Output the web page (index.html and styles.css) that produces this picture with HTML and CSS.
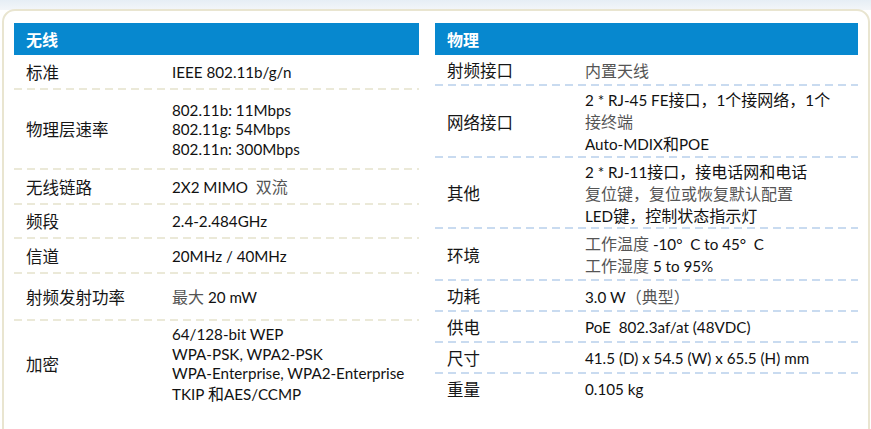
FILE: index.html
```html
<!DOCTYPE html>
<html lang="zh-CN">
<head>
<meta charset="utf-8">
<title>规格</title>
<link rel="stylesheet" href="styles.css">
</head>
<body>
<div class="page">
  <div class="panel">
    <section class="spec spec-left">
      <div class="head">无线</div>
      <div class="row"><div class="k">标准</div><div class="v">IEEE 802.11b/g/n</div></div>
      <div class="row"><div class="k">物理层速率</div><div class="v">802.11b: 11Mbps<br>802.11g: 54Mbps<br>802.11n: 300Mbps</div></div>
      <div class="row"><div class="k">无线链路</div><div class="v">2X2 MIMO&nbsp; <span class="g">双流</span></div></div>
      <div class="row"><div class="k">频段</div><div class="v">2.4-2.484GHz</div></div>
      <div class="row"><div class="k">信道</div><div class="v">20MHz / 40MHz</div></div>
      <div class="row"><div class="k">射频发射功率</div><div class="v"><span class="g">最大</span> 20 mW</div></div>
      <div class="row last"><div class="k">加密</div><div class="v">64/128-bit WEP<br>WPA-PSK, WPA2-PSK<br>WPA-Enterprise, WPA2-Enterprise<br>TKIP <span class="c">和</span>AES/CCMP</div></div>
    </section>
    <section class="spec spec-right">
      <div class="head">物理</div>
      <div class="row"><div class="k">射频接口</div><div class="v"><span class="g">内置天线</span></div></div>
      <div class="row"><div class="k">网络接口</div><div class="v">2 * RJ-45 FE<span class="c">接口，</span>1<span class="c">个接网络，</span>1<span class="c">个</span><br><span class="g">接终端</span><br>Auto-MDIX<span class="c">和</span>POE</div></div>
      <div class="row"><div class="k">其他</div><div class="v">2 * RJ-11<span class="c">接口，接电话网和电话</span><br><span class="g">复位键，复位或恢复默认配置</span><br>LED<span class="c">键，控制状态指示灯</span></div></div>
      <div class="row"><div class="k">环境</div><div class="v"><span class="g">工作温度</span> -10°&nbsp; C to 45°&nbsp; C<br><span class="g">工作湿度</span> 5 to 95%</div></div>
      <div class="row"><div class="k">功耗</div><div class="v">3.0 W<span class="g">（典型）</span></div></div>
      <div class="row"><div class="k">供电</div><div class="v">PoE&nbsp; 802.3af/at (48VDC)</div></div>
      <div class="row"><div class="k">尺寸</div><div class="v">41.5 (D) x 54.5 (W) x 65.5 (H) mm</div></div>
      <div class="row last"><div class="k">重量</div><div class="v">0.105 kg</div></div>
    </section>
  </div>
</div>
</body>
</html>
```

FILE: styles.css
```css
html, body {
  margin: 0;
  padding: 0;
}
body {
  width: 871px;
  height: 429px;
  overflow: hidden;
  background: linear-gradient(to bottom, #e6eef5 0px, #f3f6f9 10px, #ffffff 10px);
  font-family: Lato, "Noto Sans CJK SC", sans-serif;
  color: #111;
}
.page {
  padding: 9px 1px 0 2px;
}
.panel {
  height: 440px;
  box-sizing: border-box;
  border: 2px solid #e9e5d0;
  border-radius: 13px;
  background: #fff;
  padding: 12px 9px 0 10px;
  display: flex;
  gap: 16px;
}
.spec {
  display: grid;
  align-content: start;
}
.spec-left {
  width: 405px;
  grid-template-rows: 32px 35px 80px 35px 34px 35px 47px 100px;
}
.spec-right {
  width: 423px;
  grid-template-rows: 32px 31px 72px 71px 52px 31px 31px 31px 40px;
}
.head {
  background: #0788cf;
  color: #fff;
  font-weight: bold;
  font-size: 16px;
  line-height: 32px;
  padding-left: 12px;
  font-family: "Noto Sans CJK SC", sans-serif;
}
.row {
  display: grid;
  align-items: center;
  background-repeat: repeat-x;
  background-position: left bottom;
  background-size: 13px 2px;
  font-size: 15.2px;
  line-height: 19.5px;
}
.spec-left .row {
  grid-template-columns: 158px 1fr;
  background-image: linear-gradient(to right, #ebe9d8 0 8px, transparent 8px 13px);
}
.spec-right .row {
  grid-template-columns: 150px 1fr;
  line-height: 21px;
  background-image: linear-gradient(to right, #c9dbf0 0 8px, transparent 8px 13px);
}
.row.last {
  background-image: none;
  align-items: start;
}
.spec-left .row.last {
  padding-top: 4px;
  align-items: center;
  padding-bottom: 26px;
}
.spec-right .row.last {
  padding-top: 5px;
}
.k {
  padding-left: 12px;
  font-family: "Noto Sans CJK SC", sans-serif;
  font-size: 16.5px;
  color: #161616;
}
.v {
  color: #111;
}
.c, .g {
  font-family: "Noto Sans CJK SC", sans-serif;
  font-size: 16px;
}
.g {
  color: #555;
}
```
